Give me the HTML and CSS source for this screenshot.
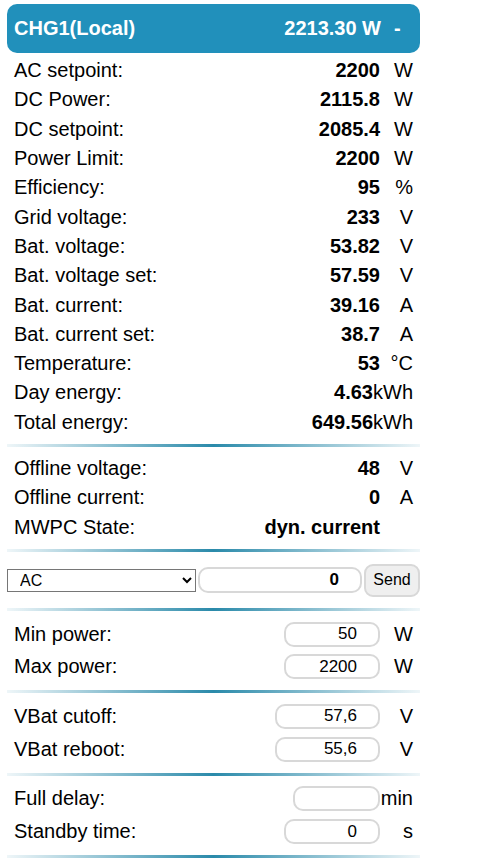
FILE: index.html
```html
<!DOCTYPE html>
<html>
<head>
  <title>CHG1 Details</title>
  <link rel="stylesheet" href="styles.css">
</head>
<body>
  <div class="charger">
    <div class="charger-head">
      <span class="charger-name">CHG1(Local)</span>
      <span class="charger-power">2213.30 W</span>
      <span class="charger-state">-</span>
    </div>

    <div class="rows first">
      <div class="row"><span>AC setpoint:</span><b>2200</b><span class="unit">W</span></div>
      <div class="row"><span>DC Power:</span><b>2115.8</b><span class="unit">W</span></div>
      <div class="row"><span>DC setpoint:</span><b>2085.4</b><span class="unit">W</span></div>
      <div class="row"><span>Power Limit:</span><b>2200</b><span class="unit">W</span></div>
      <div class="row"><span>Efficiency:</span><b>95</b><span class="unit">%</span></div>
      <div class="row"><span>Grid voltage:</span><b>233</b><span class="unit">V</span></div>
      <div class="row"><span>Bat. voltage:</span><b>53.82</b><span class="unit">V</span></div>
      <div class="row"><span>Bat. voltage set:</span><b>57.59</b><span class="unit">V</span></div>
      <div class="row"><span>Bat. current:</span><b>39.16</b><span class="unit">A</span></div>
      <div class="row"><span>Bat. current set:</span><b>38.7</b><span class="unit">A</span></div>
      <div class="row"><span>Temperature:</span><b>53</b><span class="unit">&deg;C</span></div>
      <div class="row"><span>Day energy:</span><b>4.63</b><span class="unit">kWh</span></div>
      <div class="row"><span>Total energy:</span><b>649.56</b><span class="unit">kWh</span></div>
    </div>
    <div class="sep"></div>

    <div class="rows">
      <div class="row"><span>Offline voltage:</span><b>48</b><span class="unit">V</span></div>
      <div class="row"><span>Offline current:</span><b>0</b><span class="unit">A</span></div>
      <div class="row"><span>MWPC State:</span><b>dyn. current</b><span class="unit"></span></div>
    </div>
    <div class="sep"></div>

    <div class="command">
      <select class="command-select">
        <option>AC</option>
        <option>DC</option>
      </select>
      <input class="command-value" type="text" value="0">
      <button class="command-send">Send</button>
    </div>
    <div class="sep"></div>

    <div class="rows settings">
      <div class="row"><span>Min power:</span><input class="setting" type="text" value="50"><span class="unit">W</span></div>
      <div class="row"><span>Max power:</span><input class="setting" type="text" value="2200"><span class="unit">W</span></div>
    </div>
    <div class="sep"></div>

    <div class="rows settings">
      <div class="row"><span>VBat cutoff:</span><input class="setting wide" type="text" value="57,6"><span class="unit">V</span></div>
      <div class="row"><span>VBat reboot:</span><input class="setting wide" type="text" value="55,6"><span class="unit">V</span></div>
    </div>
    <div class="sep"></div>

    <div class="rows settings">
      <div class="row"><span>Full delay:</span><input class="setting narrow" type="text" value=""><span class="unit">min</span></div>
      <div class="row"><span>Standby time:</span><input class="setting" type="text" value="0"><span class="unit">s</span></div>
    </div>
    <div class="sep"></div>
  </div>
</body>
</html>
```

FILE: styles.css
```css
body {
  font-family: Arial, "Liberation Sans", sans-serif;
  background-color: #fff;
  color: #000;
  margin: 0;
  padding: 4px 59px 0 7px;
}

.charger {
  width: 413px;
}

.charger-head {
  display: flex;
  align-items: center;
  height: 49px;
  padding: 0 7px;
  background-color: #2190bb;
  border-radius: 10px;
  color: #fff;
  font-size: 20px;
  font-weight: bold;
}

.charger-name {
  flex: 1;
}

.charger-state {
  width: 19px;
  margin-left: 13px;
}

.rows {
  padding: 0 7px;
}

.rows.first {
  padding-top: 3px;
}

.row {
  display: grid;
  grid-template-columns: 1fr auto auto;
  align-items: center;
  height: 29.3px;
  font-size: 20px;
}

.row b {
  text-align: right;
}

.unit {
  min-width: 33px;
  text-align: right;
}

.sep {
  height: 3px;
  margin: 7px 0;
  background: linear-gradient(to right, rgba(42, 138, 170, 0.08), #2a8aaa 50%, rgba(42, 138, 170, 0.08));
}

.command {
  display: flex;
  align-items: center;
  gap: 2px;
  padding: 5px 0 4px;
}

.command-select {
  width: 189px;
  height: 23px;
  font-family: Arial, "Liberation Sans", sans-serif;
  font-size: 16px;
  padding: 0 8px;
  border: 1px solid #767676;
  border-radius: 0;
  background: #fff;
  color: #000;
}

.command-value {
  width: 164px;
  height: 26px;
  box-sizing: border-box;
  border: 2px solid #d8d8d8;
  border-radius: 10px;
  padding: 0 21px 0 4px;
  text-align: right;
  font-family: Arial, "Liberation Sans", sans-serif;
  font-size: 17px;
  font-weight: bold;
}

.command-send {
  width: 56px;
  height: 33px;
  border: 2px solid #d8d8d8;
  border-radius: 9px;
  background: #efefef;
  font-family: Arial, "Liberation Sans", sans-serif;
  font-size: 16px;
  color: #000;
}

.settings .row {
  height: 32.7px;
}

.setting {
  width: 96px;
  height: 25px;
  box-sizing: border-box;
  border: 2px solid #d8d8d8;
  border-radius: 10px;
  padding: 0 21px 0 4px;
  text-align: right;
  font-family: Arial, "Liberation Sans", sans-serif;
  font-size: 17px;
  color: #000;
}

.setting.wide {
  width: 105px;
}

.setting.narrow {
  width: 87px;
}
```
